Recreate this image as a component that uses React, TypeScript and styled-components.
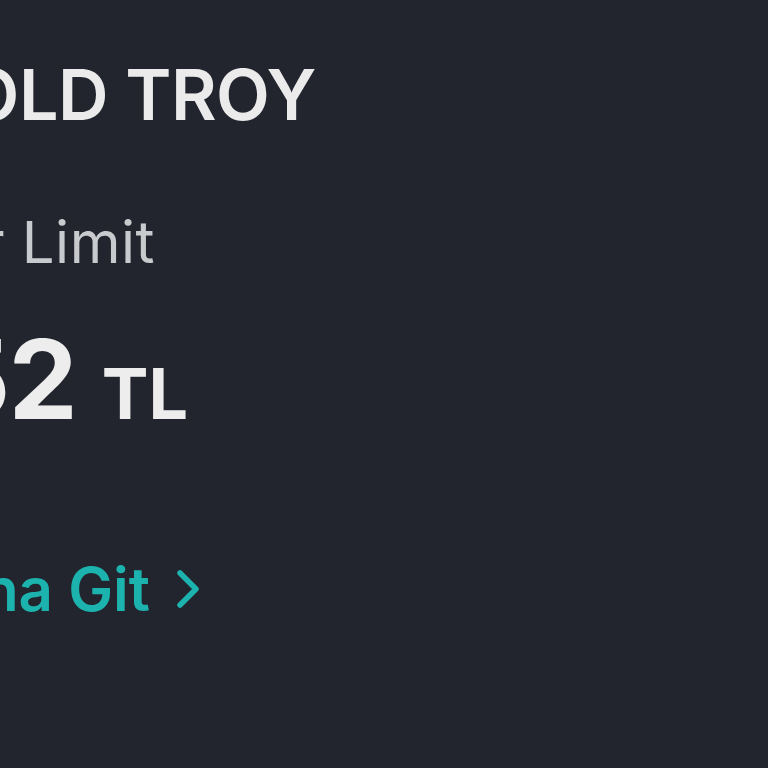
import React from "react";
import styled, { createGlobalStyle } from "styled-components";

const Global = createGlobalStyle`
  html, body { margin: 0; padding: 0; background: #22252e; overflow: hidden; }
  body { font-family: Inter, "Noto Sans", sans-serif; }
`;

const Page = styled.main`
  width: 768px;
  height: 768px;
  background: #22252e;
  display: flex;
  flex-direction: column;
  overflow: hidden;
`;

const Line = styled.div<{ $w: number; $top: number }>`
  display: flex;
  justify-content: flex-end;
  align-items: baseline;
  width: ${(p) => p.$w}px;
  margin-top: ${(p) => p.$top}px;
  white-space: nowrap;
`;

const Title = styled.h1`
  margin: 0;
  font-size: 70px;
  line-height: 70px;
  font-weight: 600;
  color: #ebebeb;
  letter-spacing: -0.5px;
`;

const Label = styled.span`
  font-size: 58px;
  line-height: 58px;
  font-weight: 400;
  color: #c9cacd;
  letter-spacing: 0.5px;
`;

const Amount = styled.span`
  font-size: 110px;
  line-height: 110px;
  font-weight: 700;
  color: #ededed;
  letter-spacing: -2px;
`;

const Currency = styled.span`
  font-size: 70px;
  line-height: 70px;
  font-weight: 700;
  color: #ededed;
  margin-left: 26px;
`;

const LinkText = styled.a`
  display: flex;
  align-items: center;
  gap: 26px;
  font-size: 60px;
  line-height: 60px;
  font-weight: 600;
  color: #1cb3ae;
  text-decoration: none;
`;

const Chevron = () => (
  <svg width="24" height="40" viewBox="0 0 24 40" fill="none">
    <path d="M4 4 L20 20 L4 36" stroke="#1cb3ae" strokeWidth="5.5" strokeLinecap="round" strokeLinejoin="round" />
  </svg>
);

export default function App() {
  return (
    <>
      <Global />
      <Page>
        <Line $w={316} $top={60}>
          <Title>GOLD TROY</Title>
        </Line>
        <Line $w={155} $top={83}>
          <Label>Kullanılabilir Limit</Label>
        </Line>
        <Line $w={188} $top={53}>
          <Amount>12.453,52</Amount>
          <Currency>TL</Currency>
        </Line>
        <Line $w={200} $top={125}>
          <LinkText href="#">
            Kartına Git
            <Chevron />
          </LinkText>
        </Line>
      </Page>
    </>
  );
}
